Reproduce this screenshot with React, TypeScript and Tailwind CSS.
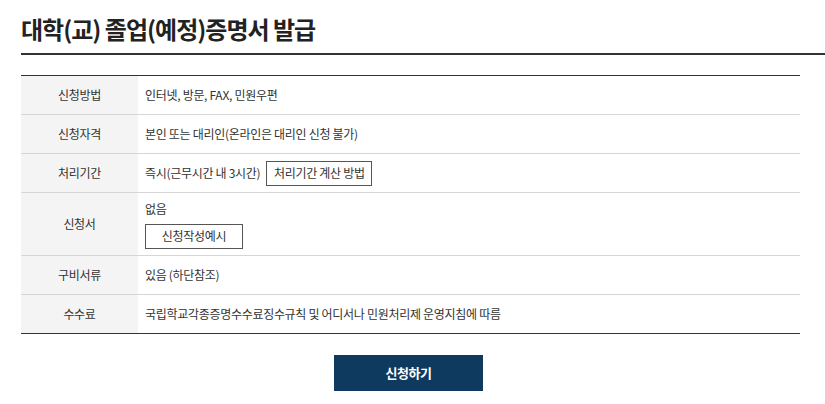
import React from "react"

const font = { fontFamily: '"Noto Sans CJK KR", "Noto Sans", sans-serif' }

type Row = { label: string; content: React.ReactNode; tall?: boolean }

const rows: Row[] = [
  { label: "신청방법", content: "인터넷, 방문, FAX, 민원우편" },
  { label: "신청자격", content: "본인 또는 대리인(온라인은 대리인 신청 불가)" },
  {
    label: "처리기간",
    content: (
      <div className="flex items-center gap-[6px]">
        <span>즉시(근무시간 내 3시간)</span>
        <button className="h-[25px] w-[106px] border border-[#555] bg-white text-[12px] tracking-[-0.3px] text-[#333]">
          처리기간 계산 방법
        </button>
      </div>
    ),
  },
  {
    label: "신청서",
    tall: true,
    content: (
      <div className="flex flex-col items-start gap-[6px]">
        <span>없음</span>
        <button className="h-[25px] w-[98px] border border-[#555] bg-white text-[12px] tracking-[-0.3px] text-[#333]">
          신청작성예시
        </button>
      </div>
    ),
  },
  { label: "구비서류", content: "있음 (하단참조)" },
  { label: "수수료", content: "국립학교각종증명수수료징수규칙 및 어디서나 민원처리제 운영지침에 따름" },
]

export default function App() {
  return (
    <div className="min-h-[404px] w-[825px] bg-white text-[#333]" style={font}>
      {/* Title */}
      <div className="pl-[21px] pt-[12px]">
        <h1 className="pb-[8px] text-[24px] font-bold leading-[33px] tracking-[-1px] text-[#222]">
          대학(교) 졸업(예정)증명서 발급
        </h1>
        <div className="h-[2px] bg-[#333]" />
      </div>

      {/* Info table */}
      <div className="ml-[21px] mt-[20px] w-[779px] border-t border-b border-[#333]">
        {rows.map((r, i) => (
          <div
            key={r.label}
            className={`flex text-[12px] tracking-[-0.3px] ${i > 0 ? "border-t border-[#d6d6d6]" : ""} ${
              r.tall ? "h-[63px]" : i > 0 ? "h-[39px]" : "h-[38px]"
            }`}
          >
            <div className="flex w-[117px] shrink-0 items-center justify-center bg-[#f4f4f4] text-[#333]">
              {r.label}
            </div>
            <div className="flex flex-1 items-center pl-[7px] leading-[18px] text-[#333]">
              {r.content}
            </div>
          </div>
        ))}
      </div>

      {/* Submit */}
      <div className="flex w-[817px] justify-center pt-[21px]">
        <button className="h-[36px] w-[149px] bg-[#0f3a60] text-[13px] font-bold tracking-[-0.5px] text-white">
          신청하기
        </button>
      </div>
    </div>
  )
}
